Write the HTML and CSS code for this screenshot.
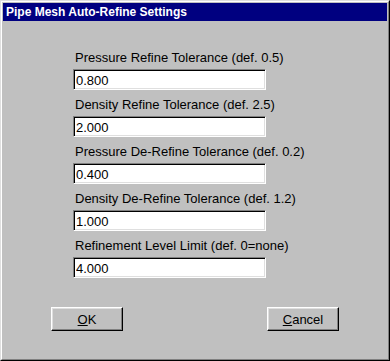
FILE: index.html
```html
<!DOCTYPE html>
<html lang="en">
<head>
  <meta charset="UTF-8" />
  <title>Pipe Mesh Auto-Refine Settings</title>
  <link rel="stylesheet" href="styles.css">
</head>
<body>

  <div class="window">
    <div class="frame">
      <div class="title-bar">Pipe Mesh Auto-Refine Settings</div>

      <form class="settings-form">
        <div class="field">
          <label for="p-refine">Pressure Refine Tolerance (def. 0.5)</label>
          <input type="text" id="p-refine" value="0.800" />
        </div>
        <div class="field">
          <label for="d-refine">Density Refine Tolerance (def. 2.5)</label>
          <input type="text" id="d-refine" value="2.000" />
        </div>
        <div class="field">
          <label for="p-derefine">Pressure De-Refine Tolerance (def. 0.2)</label>
          <input type="text" id="p-derefine" value="0.400" />
        </div>
        <div class="field">
          <label for="d-derefine">Density De-Refine Tolerance (def. 1.2)</label>
          <input type="text" id="d-derefine" value="1.000" />
        </div>
        <div class="field last">
          <label for="level-limit">Refinement Level Limit (def. 0=none)</label>
          <input type="text" id="level-limit" value="4.000" />
        </div>

        <div class="buttons">
          <button type="button" class="btn"><u>O</u>K</button>
          <button type="button" class="btn"><u>C</u>ancel</button>
        </div>
      </form>
    </div>
  </div>

</body>
</html>
```

FILE: styles.css
```css
body {
  margin: 0;
  font-family: 'Liberation Sans', Arial, sans-serif;
  background-color: #c0c0c0;
}

.window {
  width: 390px;
  height: 361px;
  box-sizing: border-box;
  border: 1px solid;
  border-color: #dfdfdf #000 #000 #dfdfdf;
}

.frame {
  height: 100%;
  box-sizing: border-box;
  border: 1px solid;
  border-color: #fff #808080 #808080 #fff;
  padding: 1px;
}

.title-bar {
  height: 18px;
  background-color: #000080;
  color: white;
  font-weight: bold;
  font-size: 12px;
  line-height: 18px;
  padding-left: 3px;
}

.settings-form {
  padding: 29px 0 0 70px;
}

.field {
  display: flex;
  flex-direction: column;
  margin-bottom: 7px;
}

.field.last {
  margin-bottom: 0;
}

label {
  font-size: 13px;
  color: #000;
  line-height: 15px;
  padding-left: 2px;
  margin-bottom: 4px;
}

input[type="text"] {
  width: 193px;
  height: 21px;
  box-sizing: border-box;
  margin: 0;
  padding: 1px 2px 0;
  border: 1px solid;
  border-color: #808080 #fff #fff #808080;
  box-shadow: inset 1px 1px 0 #000, inset -1px -1px 0 #dfdfdf;
  font-family: 'Liberation Sans', Arial, sans-serif;
  font-size: 13px;
  background: white;
  outline: none;
}

.buttons {
  display: flex;
  justify-content: space-between;
  width: 288px;
  margin: 29px 0 0 -22px;
}

.btn {
  width: 72px;
  height: 24px;
  background-color: #c0c0c0;
  border: 1px solid;
  border-color: #fff #000 #000 #fff;
  box-shadow: inset -1px -1px 0 #808080, inset 1px 1px 0 #dfdfdf;
  font-family: 'Liberation Sans', Arial, sans-serif;
  font-size: 13px;
  color: #000;
  padding: 0;
}
```
